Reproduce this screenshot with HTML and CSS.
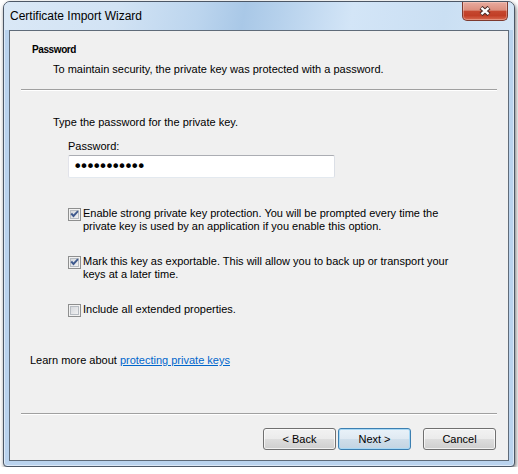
FILE: index.html
```html
<!doctype html>
<html>
<head>
<meta charset="utf-8">
<title>Certificate Import Wizard</title>
<link rel="stylesheet" href="styles.css">
</head>

<body>
<div class="window">
	<div class="titlebar">
		<span class="title">Certificate Import Wizard</span>
		<a href="javascript:;" class="close"><svg width="12" height="10" viewBox="0 0 12 10"><path d="M2 1.5L10 8.5M10 1.5L2 8.5" stroke="#4b2a25" stroke-width="4.4"/><path d="M2.4 1.8L9.6 8.2M9.6 1.8L2.4 8.2" stroke="#fff" stroke-width="2.4"/></svg></a>
	</div>
	<div class="client">
		<div class="head">
			<h1>Password</h1>
			<p>To maintain security, the private key was protected with a password.</p>
		</div>
		<div class="line"></div>
		<div class="main">
			<p class="intro">Type the password for the private key.</p>
			<label class="field">Password:<input type="password" class="pw" value="secretpass1"></label>
			<ul class="opts">
				<li><span class="box"><svg width="9" height="9" viewBox="0 0 9 9"><path d="M0.5 4.2L2 2.8L3.5 4.6L7.3 0.5L8.6 1.8L3.5 7.6Z" fill="#3f5a8e"/></svg></span><span class="txt">Enable strong private key protection. You will be prompted every time the private key is used by an application if you enable this option.</span></li>
				<li><span class="box"><svg width="9" height="9" viewBox="0 0 9 9"><path d="M0.5 4.2L2 2.8L3.5 4.6L7.3 0.5L8.6 1.8L3.5 7.6Z" fill="#3f5a8e"/></svg></span><span class="txt">Mark this key as exportable. This will allow you to back up or transport your keys at a later time.</span></li>
				<li><span class="box"></span><span class="txt">Include all extended properties.</span></li>
			</ul>
			<p class="more">Learn more about <a href="javascript:;">protecting private keys</a></p>
		</div>
		<div class="line"></div>
		<div class="foot">
			<a href="javascript:;" class="btn">&lt; Back</a>
			<a href="javascript:;" class="btn def">Next &gt;</a>
			<a href="javascript:;" class="btn cancel">Cancel</a>
		</div>
	</div>
</div>
</body>
</html>
```

FILE: styles.css
```css
*{ margin:0; padding:0; list-style:none; box-sizing:border-box;}
body{ background:#fff; font:11px/13px "Liberation Sans", Arial, sans-serif; color:#000;}
a{ text-decoration:none; color:#000;}

.window{ width:512px; height:466px; margin:1px 0 0 3px; padding:0 5px 5px; display:flex; flex-direction:column; border:1px solid #4c5766; border-radius:7px 7px 4px 4px; background:#bad3ee; box-shadow:1px 2px 4px rgba(0,0,0,.55), inset 0 0 0 1px rgba(255,255,255,.5);}

.titlebar{ height:28px; margin:0 -5px; padding:0 6px; display:flex; justify-content:space-between; align-items:flex-start; border-radius:6px 6px 0 0; background:linear-gradient(100deg,#dae8f6 0%,#d2e3f4 22%,#bcd5ee 38%,#a9c8e7 47%,#b6d1ec 54%,#d3e5f7 68%,#cadff3 86%,#d5e6f6 100%);}
.title{ font-size:12px; line-height:15px; padding-top:7px;}
.close{ width:46px; height:19px; display:flex; align-items:center; justify-content:center; border:1px solid #7d3a2f; border-top:0; border-radius:0 0 5px 5px; background:linear-gradient(#e8ab9f 0%,#dc8f7e 45%,#c5472f 52%,#c13e26 75%,#d8694f 100%); box-shadow:inset 0 0 0 1px rgba(255,230,220,.35);}

.client{ flex:1; display:flex; flex-direction:column; border:1px solid #5f6b79; background:#f0f0f0;}

.head{ padding:12px 0 0 22px;}
.head h1{ font:bold 10px/13px "Liberation Sans", Arial, sans-serif; letter-spacing:-0.4px;}
.head p{ margin-top:7px; padding-left:21px;}

.line{ margin:13px 11px 0; border-top:1px solid #a0a0a0; border-bottom:1px solid #fff;}
.main + .line{ margin-top:0;}

.main{ flex:1; padding:25px 0 0 20px;}
.intro{ padding-left:23px;}
.field{ display:block; margin-top:11px; padding-left:38px;}
.pw{ display:block; width:267px; height:23px; margin-top:2px; padding:0 0 0 4px; border:1px solid; border-color:#abadb3 #dbdfe6 #e3e9ef #e2e3ea; border-radius:2px; background:#fff; font:16px "DejaVu Sans", sans-serif; letter-spacing:-3.1px; color:#000; outline:none;}

.opts{ margin-top:29px; padding-left:38px;}
.opts li{ display:flex; gap:2px; margin-top:22px;}
.opts li:first-child{ margin-top:0;}
.box{ width:13px; height:13px; margin-top:1px; flex:none; display:flex; align-items:center; justify-content:center; border:1px solid #8e8f8f; background:linear-gradient(135deg,#cfd2d7,#f7f7f7); box-shadow:inset 0 0 0 1px #f2f2f2, inset 0 0 0 2px #b7bcc2;}
.txt{ width:375px;}

.more{ margin-top:37px;}
.more a{ color:#0066cc; text-decoration:underline;}

.foot{ display:flex; justify-content:flex-end; gap:2px; padding:13px 12px 10px;}
.btn{ width:73px; height:22px; line-height:20px; text-align:center; border:1px solid #707070; border-radius:3px; background:linear-gradient(#f2f2f2 0%,#ebebeb 50%,#dddddd 51%,#cfcfcf 100%); box-shadow:inset 0 0 0 1px rgba(255,255,255,.7);}
.btn.def{ border-color:#3c7fb1; background:linear-gradient(#e9f2f9 0%,#dfe9f2 50%,#cfdeea 51%,#c3d4e2 100%); box-shadow:inset 0 0 0 1px #a7d8f5;}
.btn.cancel{ margin-left:10px;}
```
